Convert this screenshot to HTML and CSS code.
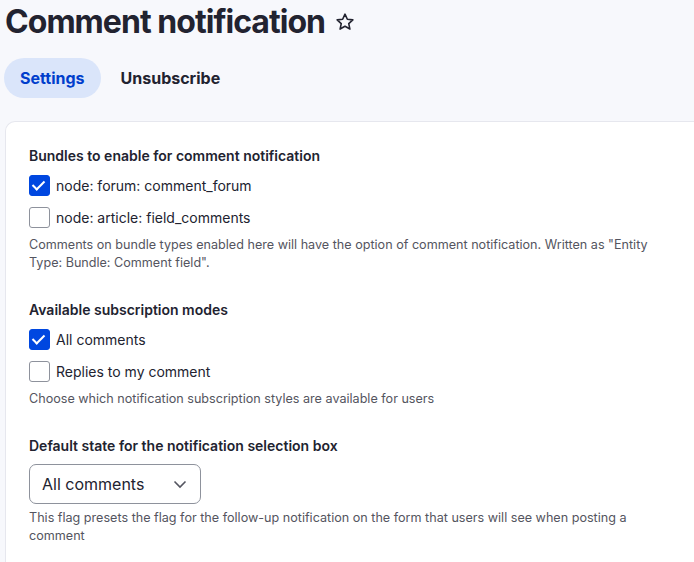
FILE: index.html
```html
<!DOCTYPE html>
<html>
<head>
  <meta charset="UTF-8">
  <title>Comment notification</title>
  <link rel="stylesheet" href="styles.css">
</head>
<body>
  <div class="page">
    <h1 class="page-title">Comment notification
      <svg class="star" width="20" height="20" viewBox="0 0 20 20"><path d="M10 2.2l2.35 5.05 5.5.6-4.1 3.75 1.15 5.45L10 14.3l-4.9 2.75 1.15-5.45-4.1-3.75 5.5-.6z" fill="none" stroke="#222330" stroke-width="1.6" stroke-linejoin="round"/></svg>
    </h1>

    <div class="tabs">
      <a class="tab active">Settings</a>
      <a class="tab">Unsubscribe</a>
    </div>

    <div class="card">
      <div class="form-item">
        <div class="label">Bundles to enable for comment notification</div>
        <label class="check"><span class="box checked"></span>node: forum: comment_forum</label>
        <label class="check"><span class="box"></span>node: article: field_comments</label>
        <div class="desc">Comments on bundle types enabled here will have the option of comment notification. Written as "Entity Type: Bundle: Comment field".</div>
      </div>

      <div class="form-item">
        <div class="label">Available subscription modes</div>
        <label class="check"><span class="box checked"></span>All comments</label>
        <label class="check"><span class="box"></span>Replies to my comment</label>
        <div class="desc">Choose which notification subscription styles are available for users</div>
      </div>

      <div class="form-item">
        <div class="label">Default state for the notification selection box</div>
        <div class="select">All comments
          <svg width="14" height="9" viewBox="0 0 14 9"><path d="M1.5 1.5L7 7l5.5-5.5" fill="none" stroke="#545560" stroke-width="1.6"/></svg>
        </div>
        <div class="desc">This flag presets the flag for the follow-up notification on the form that users will see when posting a comment</div>
      </div>
    </div>
  </div>
</body>
</html>
```

FILE: styles.css
```css
body {
  margin: 0;
  background-color: #f7f8fc;
  color: #222330;
  font-family: Inter, "Noto Sans", sans-serif;
}

.page {
  padding: 0 0 0 5px;
}

.page-title {
  margin: 0;
  padding-top: 2px;
  font-size: 32px;
  font-weight: 700;
  letter-spacing: -0.03em;
  line-height: 40px;
  display: flex;
  align-items: center;
}

.star {
  margin-left: 10px;
}

.tabs {
  display: flex;
  align-items: center;
  gap: 4px;
  margin-top: 16px;
  margin-left: -1px;
}

.tab {
  display: inline-block;
  padding: 0 16px;
  height: 40px;
  line-height: 40px;
  border-radius: 20px;
  font-size: 16px;
  font-weight: 700;
  color: #222330;
}

.tab.active {
  background-color: #dae5fa;
  color: #003ecc;
}

.card {
  margin-top: 23px;
  background-color: white;
  border: 1px solid #e6e7ee;
  border-right: none;
  border-radius: 10px 0 0 10px;
  padding: 24px 20px 30px 23px;
}

.form-item {
  margin-bottom: 28px;
}

.label {
  font-size: 14px;
  font-weight: 600;
  line-height: 20px;
  margin-bottom: 9px;
}

.check {
  display: flex;
  align-items: center;
  font-size: 14px;
  height: 21px;
  margin-bottom: 11px;
}

.box {
  width: 19px;
  height: 19px;
  border: 1px solid #8e929c;
  border-radius: 3px;
  margin-right: 6px;
  box-sizing: content-box;
  position: relative;
}

.box.checked {
  background-color: #0047e0;
  border-color: #0047e0;
}

.box.checked::after {
  content: "";
  position: absolute;
  left: 5px;
  top: 2px;
  width: 5px;
  height: 10px;
  border: solid white;
  border-width: 0 2.5px 2.5px 0;
  transform: rotate(45deg);
}

.desc {
  font-size: 12.6px;
  line-height: 18px;
  color: #545560;
  margin-top: -3px;
}

.select {
  display: flex;
  align-items: center;
  justify-content: space-between;
  width: 145px;
  height: 38px;
  padding: 0 13px 0 12px;
  margin-top: -1px;
  border: 1px solid #8e929c;
  border-radius: 7px;
  font-size: 16px;
  margin-bottom: 8px;
}
```
